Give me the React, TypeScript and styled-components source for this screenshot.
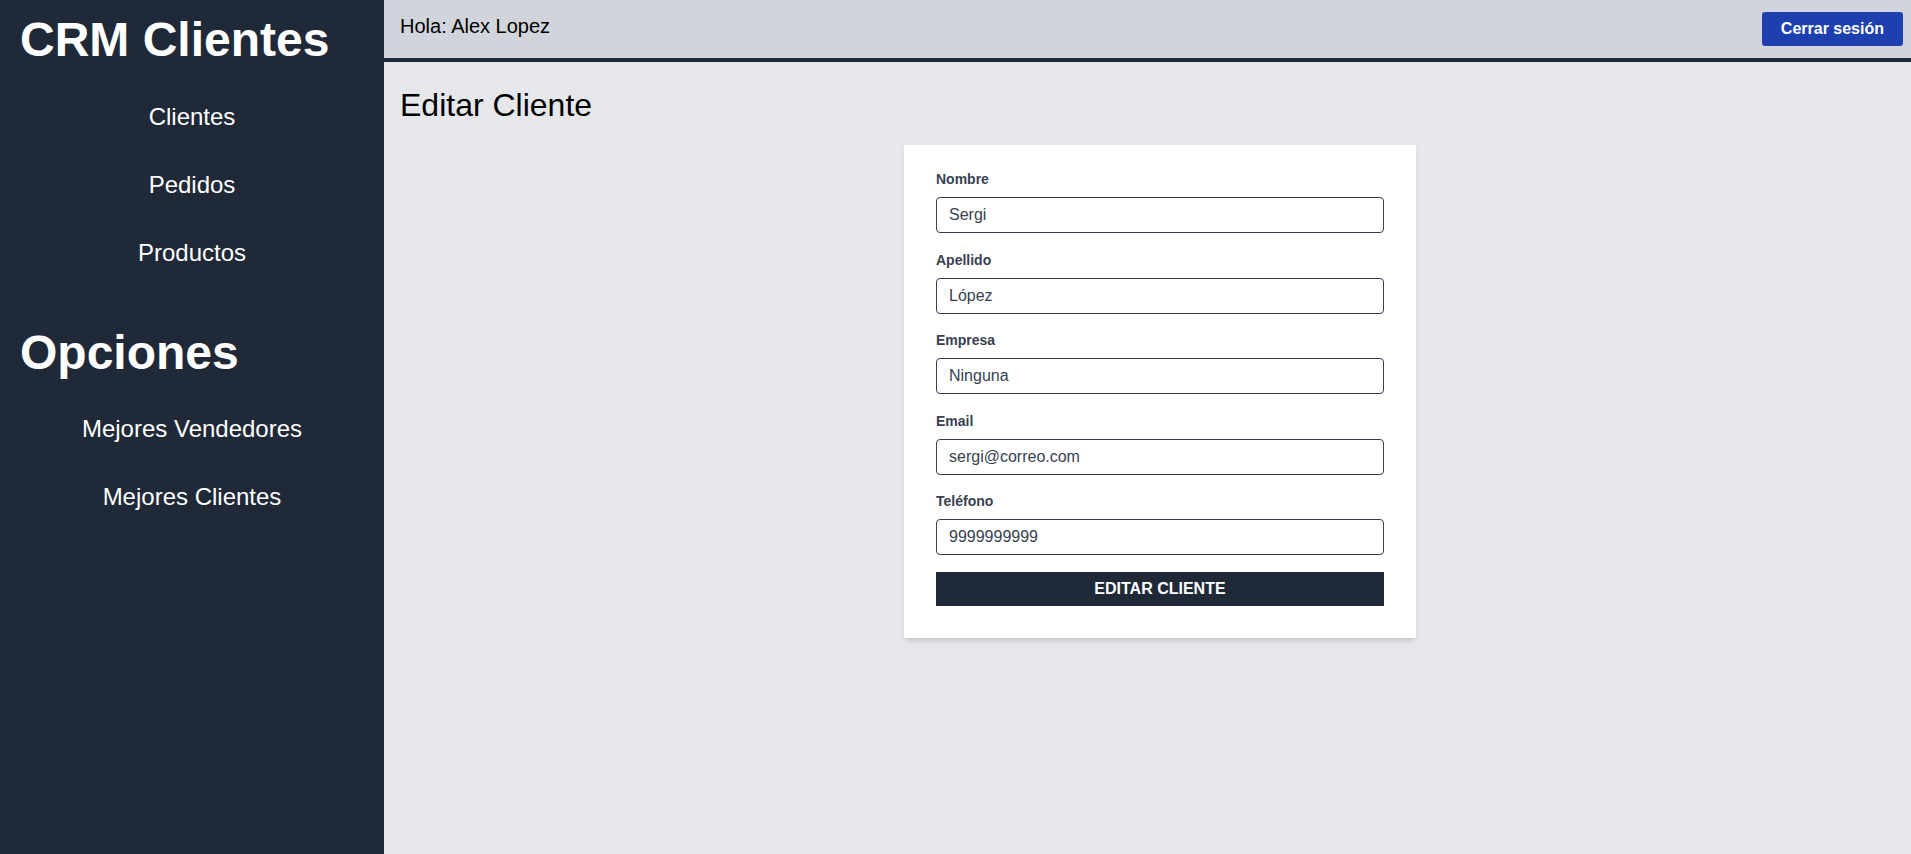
import styled, { createGlobalStyle } from "styled-components";

const GlobalStyle = createGlobalStyle`
  * {
    box-sizing: border-box;
  }
  html, body {
    margin: 0;
    padding: 0;
    font-family: "Liberation Sans", Arial, sans-serif;
    background: #e5e7eb;
  }
`;

interface Field {
  id: string;
  label: string;
  value: string;
  type?: string;
}

const fields: Field[] = [
  { id: "nombre", label: "Nombre", value: "Sergi" },
  { id: "apellido", label: "Apellido", value: "López" },
  { id: "empresa", label: "Empresa", value: "Ninguna" },
  { id: "email", label: "Email", value: "sergi@correo.com", type: "email" },
  { id: "telefono", label: "Teléfono", value: "9999999999", type: "tel" }
];

const mainLinks = ["Clientes", "Pedidos", "Productos"];
const optionLinks = ["Mejores Vendedores", "Mejores Clientes"];

const App = () => {
  return (
    <>
      <GlobalStyle />
      <Layout>
        <Sidebar>
          <Brand>CRM Clientes</Brand>
          <Nav>
            {mainLinks.map((link) => (
              <NavLink key={link} href="#">
                {link}
              </NavLink>
            ))}
          </Nav>
          <SectionTitle>Opciones</SectionTitle>
          <Nav>
            {optionLinks.map((link) => (
              <NavLink key={link} href="#">
                {link}
              </NavLink>
            ))}
          </Nav>
        </Sidebar>
        <Main>
          <Header>
            <Greeting>Hola: Alex Lopez</Greeting>
            <LogoutButton type="button">Cerrar sesión</LogoutButton>
          </Header>
          <Content>
            <PageTitle>Editar Cliente</PageTitle>
            <FormWrapper>
              <Card>
                {fields.map((field) => (
                  <Group key={field.id}>
                    <Label htmlFor={field.id}>{field.label}</Label>
                    <Input
                      id={field.id}
                      type={field.type ?? "text"}
                      defaultValue={field.value}
                    />
                  </Group>
                ))}
                <SubmitButton type="submit">Editar Cliente</SubmitButton>
              </Card>
            </FormWrapper>
          </Content>
        </Main>
      </Layout>
    </>
  );
};

const Layout = styled.div`
  display: flex;
  min-height: 100vh;
`;
const Sidebar = styled.aside`
  width: 384px;
  flex-shrink: 0;
  background: #1f2937;
  padding: 16px 20px;
  color: #ffffff;
`;
const Brand = styled.h1`
  margin: 0 0 19px;
  font-size: 48px;
  line-height: 48px;
  font-weight: 700;
  white-space: nowrap;
`;
const SectionTitle = styled.h2`
  margin: 42px 0 18px;
  font-size: 48px;
  line-height: 48px;
  font-weight: 700;
`;
const Nav = styled.nav`
  display: flex;
  flex-direction: column;
  margin: 0 -20px;
`;
const NavLink = styled.a`
  display: flex;
  align-items: center;
  justify-content: center;
  height: 68px;
  color: #ffffff;
  text-decoration: none;
  font-size: 24px;
`;
const Main = styled.main`
  flex: 1;
  display: flex;
  flex-direction: column;
  background: #e5e7eb;
`;
const Header = styled.header`
  display: flex;
  justify-content: space-between;
  align-items: flex-start;
  height: 62px;
  padding: 12px 8px 12px 16px;
  background: #d1d5db;
  border-bottom: 4px solid #1f2937;
`;
const Greeting = styled.p`
  margin: 0;
  font-size: 20px;
  line-height: 28px;
  color: #000000;
`;
const LogoutButton = styled.button`
  height: 34px;
  padding: 0 19px;
  border: none;
  border-radius: 3px;
  background: #1e40af;
  color: #ffffff;
  font-family: inherit;
  font-size: 16px;
  font-weight: 700;
  cursor: pointer;
`;
const Content = styled.section`
  padding: 23px 16px;
`;
const PageTitle = styled.h2`
  margin: 0;
  font-size: 32px;
  line-height: 40px;
  font-weight: 400;
  color: #000000;
`;
const FormWrapper = styled.div`
  display: flex;
  justify-content: center;
  margin-top: 20px;
  padding-left: 25px;
`;
const Card = styled.form`
  width: 512px;
  background: #ffffff;
  padding: 24px 32px 32px;
  box-shadow: 0 4px 6px -1px rgba(0, 0, 0, 0.1),
    0 2px 4px -1px rgba(0, 0, 0, 0.06);
`;
const Group = styled.div`
  margin-bottom: 16.5px;
`;
const Label = styled.label`
  display: block;
  margin-bottom: 8px;
  font-size: 14px;
  line-height: 20px;
  font-weight: 700;
  color: #374151;
`;
const Input = styled.input`
  display: block;
  width: 100%;
  height: 36px;
  padding: 0 12px;
  border: 1px solid #374151;
  border-radius: 4px;
  font-family: inherit;
  font-size: 16px;
  color: #374151;
  background: #ffffff;
  outline: none;
`;
const SubmitButton = styled.button`
  display: block;
  width: 100%;
  height: 34px;
  margin-top: 2px;
  border: none;
  background: #1f2937;
  color: #ffffff;
  font-family: inherit;
  font-size: 16px;
  font-weight: 700;
  text-transform: uppercase;
  cursor: pointer;
`;

export default App;
